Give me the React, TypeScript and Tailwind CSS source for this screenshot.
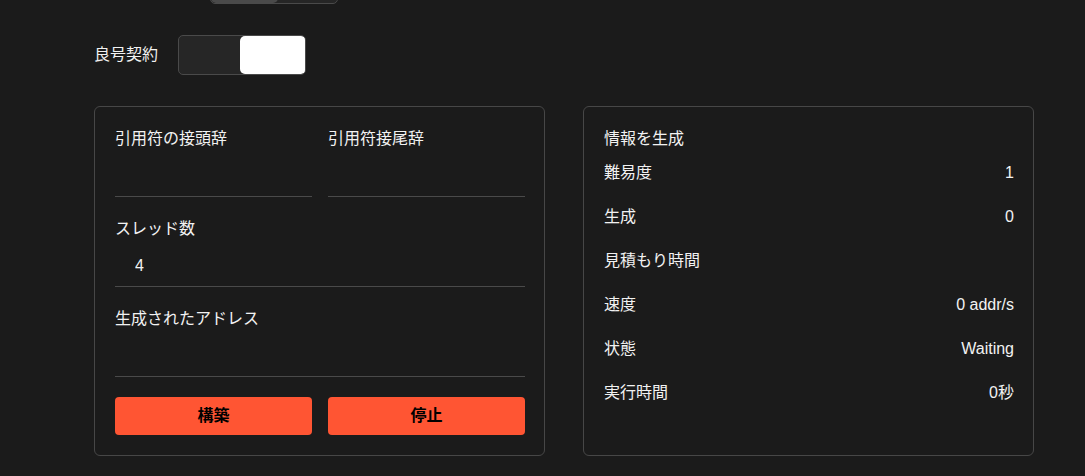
import React, { useState } from 'react';

const font = { fontFamily: '"Liberation Sans", "Noto Sans CJK JP", sans-serif' };

const Toggle: React.FC<{ on: boolean; onClick?: () => void }> = ({ on, onClick }) => (
  <button
    onClick={onClick}
    className={`flex w-[128px] h-[40px] rounded-[5px] border border-[#4a4a4a] bg-[#262626] overflow-hidden ${on ? 'justify-end' : 'justify-start'}`}
  >
    <span className={`h-full ${on ? 'w-[66px] bg-white rounded-[5px] -mr-px' : 'w-[67px] bg-[#4a4a4a] rounded-[5px]'}`}></span>
  </button>
);

const Field: React.FC<{ label: string; value?: string }> = ({ label, value }) => (
  <div className="flex flex-col">
    <label className="text-[16px] leading-6 text-[#f2f2f2]">{label}</label>
    <input
      readOnly
      value={value ?? ''}
      className="h-[46px] bg-transparent border-b border-[#4a4a4a] pl-5 pt-1 text-[16px] text-[#f2f2f2] outline-none"
    />
  </div>
);

const Row: React.FC<{ label: string; value?: string }> = ({ label, value }) => (
  <div className="flex justify-between text-[16px] leading-6 text-[#f2f2f2]">
    <span>{label}</span>
    <span>{value}</span>
  </div>
);

const App: React.FC = () => {
  const [caseOn, setCaseOn] = useState(false);
  const [contract, setContract] = useState(true);

  return (
    <div className="min-h-[476px] w-full bg-[#1b1b1b] overflow-hidden" style={font}>
      <div className="w-[940px] ml-[94px] mt-[-36px] flex flex-col">
        {/* previous option row, scrolled mostly out of view */}
        <div className="flex items-center gap-5 h-[40px]">
          <span className="w-[96px]"></span>
          <Toggle on={caseOn} onClick={() => setCaseOn(!caseOn)} />
        </div>
        <div className="flex items-center gap-[20px] h-[40px] mt-[31px]">
          <span className="text-[16px] text-[#f2f2f2]">良号契約</span>
          <Toggle on={contract} onClick={() => setContract(!contract)} />
        </div>

        <div className="flex gap-[38px] mt-[31px]">
          <div className="w-[452px] h-[350px] rounded-[6px] border border-[#474747] pl-5 pr-[19px] pt-5 flex flex-col">
            <div className="grid grid-cols-2 gap-x-4">
              <Field label="引用符の接頭辞" />
              <Field label="引用符接尾辞" />
            </div>
            <div className="mt-5">
              <Field label="スレッド数" value="4" />
            </div>
            <div className="mt-5">
              <Field label="生成されたアドレス" />
            </div>
            <div className="grid grid-cols-2 gap-x-4 mt-5">
              <button className="h-[38px] rounded-[4px] bg-[#ff5533] text-black font-bold text-[16px]">構築</button>
              <button className="h-[38px] rounded-[4px] bg-[#ff5533] text-black font-bold text-[16px]">停止</button>
            </div>
          </div>

          <div className="w-[452px] h-[350px] rounded-[6px] border border-[#474747] pl-5 pr-[19px] pt-5 flex flex-col">
            <div className="text-[16px] leading-6 text-[#f2f2f2]">情報を生成</div>
            <div className="flex flex-col gap-5 mt-[10px]">
              <Row label="難易度" value="1" />
              <Row label="生成" value="0" />
              <Row label="見積もり時間" />
              <Row label="速度" value="0 addr/s" />
              <Row label="状態" value="Waiting" />
              <Row label="実行時間" value="0秒" />
            </div>
          </div>
        </div>
      </div>
    </div>
  );
};

export default App;
